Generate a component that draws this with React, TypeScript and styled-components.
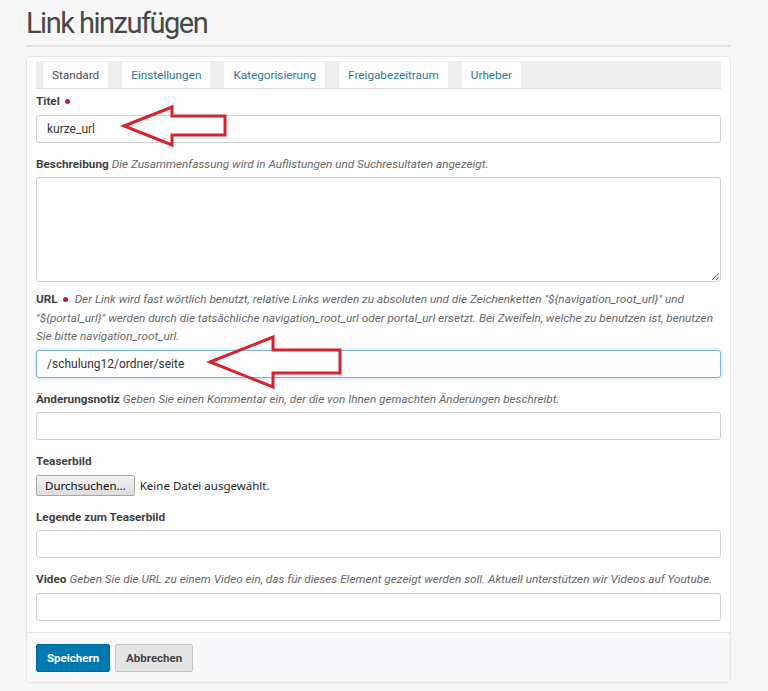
import * as React from 'react';
import styled, { createGlobalStyle, css } from 'styled-components';

const GlobalStyle = createGlobalStyle`
  html, body {
    margin: 0;
    padding: 0;
    background: #f7f7f7;
    font-family: Roboto, "Liberation Sans", sans-serif;
    color: #4d4d4d;
  }
  * { box-sizing: border-box; }
`;

const Page = styled.div`
  position: relative;
  width: 768px;
  height: 691px;
  padding: 4px 37px 0 26px;
  overflow: hidden;
`;

const Heading = styled.h1`
  margin: 0;
  font-size: 29px;
  font-weight: 400;
  letter-spacing: -1.5px;
  line-height: 38px;
  color: #484848;
  padding-bottom: 3px;
  border-bottom: 2px solid #e2e2e2;
`;

const Card = styled.div`
  margin-top: 9px;
  background: #fff;
  border: 1px solid #e6e6e6;
  border-radius: 4px;
`;

const CardBody = styled.div`
  padding: 4px 9px 0 9px;
`;

const TabBar = styled.div`
  display: flex;
  gap: 14px;
  background: #eeeeee;
  padding: 1px 0 0 7px;
  border-bottom: 1px solid #dcdcdc;
`;

const Tab = styled.div<{ $active?: boolean }>`
  background: #fff;
  font-size: 11.75px;
  line-height: 26px;
  padding: 0 9px;
  color: ${p => (p.$active ? '#4a4a4a' : '#2b7797')};
  border-radius: 2px 2px 0 0;
`;

const Fields = styled.div``;

const Field = styled.div<{ $top?: number }>`
  margin-top: ${p => (p.$top ?? 12)}px;
`;

const Label = styled.div`
  font-size: 11.75px;
  line-height: 18.5px;
  margin-bottom: 4px;
  color: #4a4a4a;
`;

const LabelName = styled.b`
  font-weight: 700;
  color: #3f3f3f;
`;

const Required = styled.span`
  display: inline-block;
  width: 5px;
  height: 5px;
  border-radius: 50%;
  background: #c4183c;
  margin: 0 4px 1px 5px;
`;

const Help = styled.i`
  color: #666;
  font-style: italic;
  margin-left: 3px;
`;

const inputBase = css`
  display: block;
  width: 100%;
  border: 1px solid #d0d0d0;
  border-radius: 3px;
  background: #fff;
  font-family: Roboto, "Liberation Sans", sans-serif;
  font-size: 12px;
  color: #333;
  outline: none;
`;

const TextInput = styled.input<{ $focused?: boolean }>`
  ${inputBase}
  height: 28px;
  padding: 0 10px;
  ${p =>
    p.$focused &&
    css`
      border-color: #7fb6d1;
      box-shadow: 0 0 4px rgba(90, 170, 210, 0.45);
    `}
`;

const TextArea = styled.textarea`
  ${inputBase}
  height: 105px;
  padding: 6px 10px;
  resize: vertical;
`;

const FileRow = styled.div`
  display: flex;
  align-items: center;
  gap: 5px;
  font-family: "Noto Sans", "Open Sans", sans-serif;
  font-size: 11.5px;
  color: #222;
`;

const FileButton = styled.button`
  height: 21px;
  padding: 0 8px;
  font-family: "Noto Sans", "Open Sans", sans-serif;
  font-size: 11.5px;
  color: #111;
  background: linear-gradient(#f2f2f2, #dddddd);
  border: 1px solid #a8a8a8;
  border-radius: 2px;
`;

const Footer = styled.div`
  margin-top: 11px;
  border-top: 1px solid #e3e3e3;
  background: #f8f8fa;
  padding: 11px 9px 10px;
  display: flex;
  gap: 5px;
  border-radius: 0 0 4px 4px;
`;

const Button = styled.button<{ $primary?: boolean }>`
  height: 28px;
  padding: 0 10px;
  font-family: Roboto, "Liberation Sans", sans-serif;
  font-size: 11.5px;
  font-weight: 700;
  border-radius: 2px;
  ${p =>
    p.$primary
      ? css`
          background: #0079b0;
          color: #fff;
          border: 1px solid #006a9a;
        `
      : css`
          background: #e4e4e4;
          color: #444;
          border: 1px solid #c6c6c6;
        `}
`;

const Overlay = styled.svg`
  position: absolute;
  left: 0;
  top: 0;
  pointer-events: none;
`;

const tabs = ['Standard', 'Einstellungen', 'Kategorisierung', 'Freigabezeitraum', 'Urheber'];

const Arrow = ({ points }: { points: string }) => (
  <polygon points={points} fill="none" stroke="#d8222b" strokeWidth={3} strokeLinejoin="miter" />
);

const App = () => (
  <Page>
    <GlobalStyle />
    <Heading>Link hinzufügen</Heading>
    <Card>
      <CardBody>
        <TabBar>
          {tabs.map((t, i) => (
            <Tab key={t} $active={i === 0}>
              {t}
            </Tab>
          ))}
        </TabBar>
        <Fields>
          <Field $top={3}>
            <Label>
              <LabelName>Titel</LabelName>
              <Required />
            </Label>
            <TextInput defaultValue="kurze_url" />
          </Field>
          <Field>
            <Label>
              <LabelName>Beschreibung</LabelName>
              <Help>Die Zusammenfassung wird in Auflistungen und Suchresultaten angezeigt.</Help>
            </Label>
            <TextArea />
          </Field>
          <Field $top={8}>
            <Label>
              <LabelName>URL</LabelName>
              <Required />
              <Help>
                Der Link wird fast wörtlich benutzt, relative Links werden zu absoluten und die
                Zeichenketten "{'${navigation_root_url}'}" und "{'${portal_url}'}" werden durch die
                tatsächliche navigation_root_url oder portal_url ersetzt. Bei Zweifeln, welche zu
                benutzen ist, benutzen Sie bitte navigation_root_url.
              </Help>
            </Label>
            <TextInput $focused defaultValue="/schulung12/ordner/seite" />
          </Field>
          <Field>
            <Label>
              <LabelName>Änderungsnotiz</LabelName>
              <Help>Geben Sie einen Kommentar ein, der die von Ihnen gemachten Änderungen beschreibt.</Help>
            </Label>
            <TextInput />
          </Field>
          <Field>
            <Label>
              <LabelName>Teaserbild</LabelName>
            </Label>
            <FileRow>
              <FileButton>Durchsuchen...</FileButton>
              <span>Keine Datei ausgewählt.</span>
            </FileRow>
          </Field>
          <Field>
            <Label>
              <LabelName>Legende zum Teaserbild</LabelName>
            </Label>
            <TextInput />
          </Field>
          <Field>
            <Label>
              <LabelName>Video</LabelName>
              <Help>
                Geben Sie die URL zu einem Video ein, das für dieses Element gezeigt werden soll.
                Aktuell unterstützen wir Videos auf Youtube.
              </Help>
            </Label>
            <TextInput />
          </Field>
        </Fields>
      </CardBody>
      <Footer>
        <Button $primary>Speichern</Button>
        <Button>Abbrechen</Button>
      </Footer>
    </Card>
    <Overlay width={768} height={691}>
      <Arrow points="124,126 172,107 172,116 225,116 225,135 172,135 172,145" />
      <Arrow points="210,362 273,337 273,350 340,350 340,373 273,373 273,387" />
    </Overlay>
  </Page>
);

export default App;
